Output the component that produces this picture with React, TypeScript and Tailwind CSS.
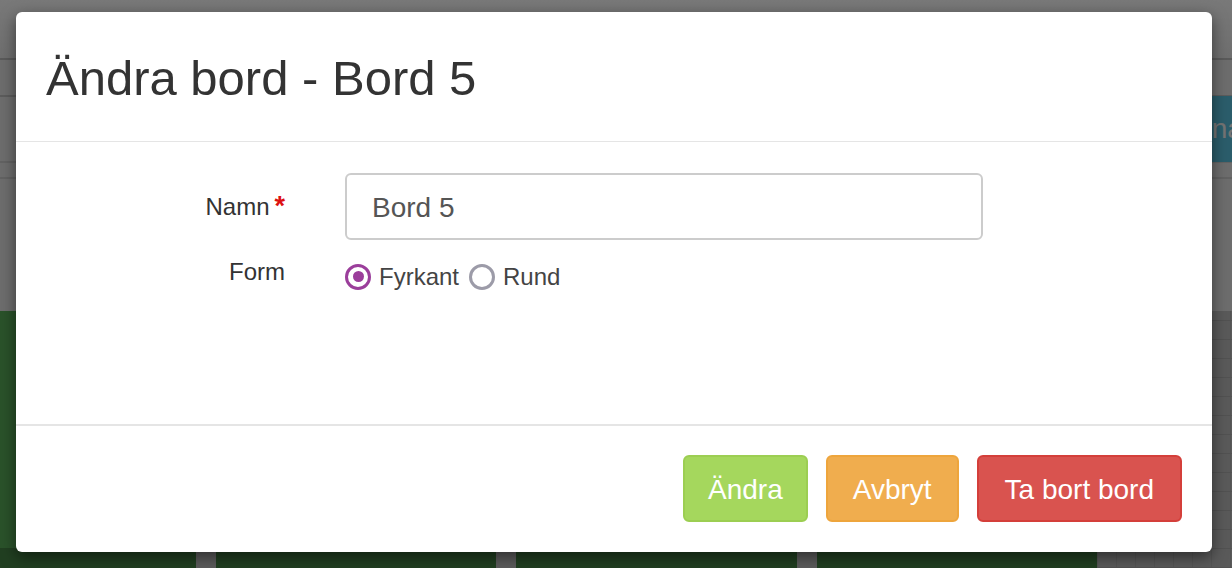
import React from "react";

function Radio({ checked, label }: { checked: boolean; label: string }) {
  return (
    <label className="flex items-center">
      {checked ? (
        <span className="flex h-[26px] w-[26px] items-center justify-center rounded-full border-[3px] border-[#9b3e9b]">
          <span className="h-[11px] w-[11px] rounded-full bg-[#9b3e9b]"></span>
        </span>
      ) : (
        <span className="h-[26px] w-[26px] rounded-full border-[3px] border-[#9c9ba8]"></span>
      )}
      <span className="ml-[8px] text-[24px] leading-[29px] text-[#444]">{label}</span>
    </label>
  );
}

export default function App() {
  return (
    <div
      className="relative h-[568px] w-[1232px] overflow-hidden bg-[#dadada]"
      style={{ fontFamily: '"Liberation Sans", Arial, sans-serif' }}
    >
      {/* Page underneath the dialog */}
      <div className="flex h-[568px] flex-col">
        <div className="h-[60px] bg-gradient-to-b from-[#f2f2f2] to-[#dedede] border-b-2 border-[#b4b4b4]"></div>
        <div className="h-[37px] border-b-2 border-[#b8b8b8]"></div>
        <div className="flex h-[66px] items-center justify-end border-b-2 border-[#c4c4c4]">
          <button className="mr-[-40px] h-[66px] w-[122px] rounded-[4px] bg-[#56bad6] pl-[15px] text-left text-[28px] text-[#e8e8e8]">
            Ordna
          </button>
        </div>
        <div className="h-[16px] border-b-2 border-[#c4c4c4]"></div>
        <div className="h-[132px]"></div>
        <div className="flex flex-1">
          <div className="flex w-[1097px] flex-col">
            <div className="h-[237px] bg-[#55a555]"></div>
            <div className="flex flex-1 gap-[20px] bg-[#b8b8b8]">
              <div className="w-[196px] bg-[#427e42]"></div>
              <div className="w-[280px] bg-[#427e42]"></div>
              <div className="w-[281px] bg-[#427e42]"></div>
              <div className="flex-1 bg-[#427e42]"></div>
            </div>
          </div>
          <div className="flex-1 bg-[#b4b4b4] bg-[repeating-linear-gradient(0deg,#a4a4a4_0px,#a4a4a4_1px,transparent_1px,transparent_19px),repeating-linear-gradient(90deg,#a8a8a8_0px,#a8a8a8_1px,transparent_1px,transparent_19px)]"></div>
        </div>
      </div>

      {/* Backdrop + dialog */}
      <div className="absolute inset-0 bg-black/50 pl-[16px] pt-[12px]">
        <div className="flex h-[540px] w-[1196px] flex-col rounded-[6px] bg-white shadow-[0_5px_15px_rgba(0,0,0,0.5)]">
          <div className="flex h-[130px] shrink-0 items-center border-b border-[#e5e5e5] px-[30px] pt-[5px]">
            <h4 className="text-[49px] leading-[1.1] text-[#333]">Ändra bord - Bord 5</h4>
          </div>

          <div className="flex-1 px-[30px] pt-[31px]">
            <div className="flex">
              <div className="w-[239px] pt-[19px] text-right text-[24px] leading-[29px] text-[#333]">
                Namn<span className="ml-[5px] text-[27px] font-bold text-[#dd1111]">*</span>
              </div>
              <input
                className="ml-[60px] h-[67px] w-[638px] rounded-[6px] border-2 border-[#cccccc] px-[25px] pt-[2px] text-[28px] text-[#555] outline-none"
                defaultValue="Bord 5"
              />
            </div>
            <div className="mt-[14px] flex">
              <div className="w-[239px] pt-[3px] text-right text-[24px] leading-[29px] text-[#333]">Form</div>
              <div className="ml-[60px] mt-[8px] flex gap-[10px]">
                <Radio checked label="Fyrkant" />
                <Radio checked={false} label="Rund" />
              </div>
            </div>
          </div>

          <div className="flex h-[128px] shrink-0 items-start justify-end gap-[18px] border-t-2 border-[#e5e5e5] px-[30px] pt-[29px]">
            <button className="h-[67px] rounded-[6px] border-2 border-[#9cce52] bg-[#a5d75d] px-[23px] pt-[2px] text-[28px] text-white">
              Ändra
            </button>
            <button className="h-[67px] rounded-[6px] border-2 border-[#eea53c] bg-[#f0ad4e] px-[25px] pt-[2px] text-[28px] text-white">
              Avbryt
            </button>
            <button className="h-[67px] rounded-[6px] border-2 border-[#d43f3a] bg-[#d9534f] px-[26px] pt-[2px] text-[28px] text-white">
              Ta bort bord
            </button>
          </div>
        </div>
      </div>
    </div>
  );
}
